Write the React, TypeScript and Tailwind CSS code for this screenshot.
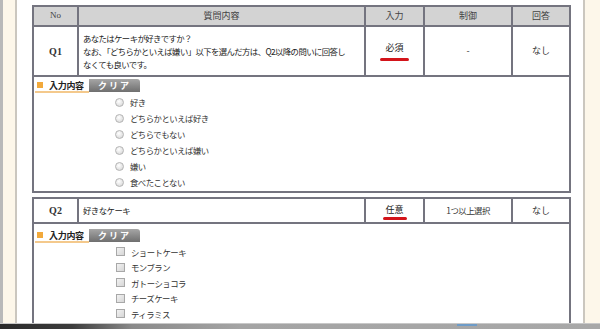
import React from "react";

const B = "border-[#74747f]";

function Radio() {
  return (
    <span className="inline-block w-[9px] h-[9px] rounded-full border border-[#b4b4b4] bg-[radial-gradient(circle_at_40%_35%,#ffffff_0%,#e4e4e4_60%,#cfcfcf_100%)]" />
  );
}

function Check() {
  return (
    <span className="inline-block w-[9px] h-[9px] border border-[#a8a8a8] bg-[linear-gradient(135deg,#f2f2f2,#d6d6d6)]" />
  );
}

function Label() {
  return (
    <div className="flex items-start">
      <div className="ml-[1px] w-[54px] h-[14px] border-b-2 border-[#f4c98c] flex items-center pl-[2px]">
        <span className="w-[6px] h-[6px] bg-[#f2a93b]" />
        <span className="ml-[6px] text-[9px] font-bold leading-none text-[#222] tracking-[-0.3px]">入力内容</span>
      </div>
      <div className="w-[51px] h-[13px] rounded-tr-[3px] bg-[linear-gradient(to_bottom,#a6a6a6,#8a8a8a_50%,#6f6f6f)] flex items-center justify-center">
        <span className="text-[9px] font-bold text-white tracking-[2px] leading-none">クリア</span>
      </div>
    </div>
  );
}

function HeadCell({ w, first, children }: { w: string; first?: boolean; children: React.ReactNode }) {
  return (
    <div className={`${w} ${first ? "" : "border-l-2 " + B} flex items-center justify-center text-[9px] text-[#444]`}>
      {children}
    </div>
  );
}

export default function App() {
  const radios = ["好き", "どちらかといえば好き", "どちらでもない", "どちらかといえば嫌い", "嫌い", "食べたことない"];
  const checks = ["ショートケーキ", "モンブラン", "ガトーショコラ", "チーズケーキ", "ティラミス"];
  return (
    <div className="relative w-[600px] h-[329px] overflow-hidden flex bg-[#fdf7ea] font-['Noto_Sans_CJK_JP','Noto_Sans',sans-serif] text-[#333]">
      <div className="w-[3px] bg-[#b9b9b9]" />
      <div className="w-[12px] bg-[#fdf7ea]" />
      <div className="w-[2px] bg-[#cbc7bf]" />
      <div className="w-[566px] bg-white pl-[15px] pt-[5px]">
        {/* Q1 box */}
        <div className={`w-[539px] border-2 ${B}`}>
          <div className="flex h-[18px] bg-[#d3d3d3]">
            <HeadCell w="w-[43px]" first>
              <span className="font-['Liberation_Serif',serif] text-[9px]">No</span>
            </HeadCell>
            <HeadCell w="w-[287px]">質問内容</HeadCell>
            <HeadCell w="w-[59px]">入力</HeadCell>
            <HeadCell w="w-[88px]">制御</HeadCell>
            <HeadCell w="w-[58px]">回答</HeadCell>
          </div>
          <div className={`flex h-[50px] border-t-2 ${B}`}>
            <div className="w-[43px] flex items-center justify-center">
              <span className="font-['Liberation_Serif',serif] text-[10px] font-semibold text-[#333]">Q1</span>
            </div>
            <div className={`w-[287px] border-l-2 ${B} flex items-center px-[4px]`}>
              <div className="text-[8.4px] leading-[13px] text-[#222] tracking-[-0.6px] whitespace-nowrap">
                <div>あなたはケーキが好きですか？</div>
                <div>なお、「どちらかといえば嫌い」以下を選んだ方は、Q2以降の問いに回答し</div>
                <div>なくても良いです。</div>
              </div>
            </div>
            <div className={`w-[59px] border-l-2 ${B} flex flex-col items-center justify-center`}>
              <span className="mt-[2px] text-[9px] leading-none text-[#222]">必須</span>
              <span className="mt-[6px] w-[29px] h-[3px] rounded-full bg-[#d3141a]" />
            </div>
            <div className={`w-[88px] border-l-2 ${B} flex items-center justify-center text-[9px]`}>-</div>
            <div className={`w-[58px] border-l-2 ${B} flex items-center justify-center text-[9px]`}>なし</div>
          </div>
          <div className={`h-[116px] border-t-2 ${B} pt-[2px]`}>
            <Label />
            <div className="mt-[1px] pl-[81px]">
              {radios.map((r) => (
                <div key={r} className="h-[16px] flex items-center">
                  <Radio />
                  <span className="ml-[6px] text-[8.4px] text-[#333] tracking-[-0.5px] leading-none">{r}</span>
                </div>
              ))}
            </div>
          </div>
        </div>
        {/* Q2 box */}
        <div className={`mt-[4px] w-[539px] border-2 border-b-0 ${B} h-[140px]`}>
          <div className="flex h-[23px]">
            <div className="w-[43px] flex items-center justify-center">
              <span className="font-['Liberation_Serif',serif] text-[10px] font-semibold text-[#333]">Q2</span>
            </div>
            <div className={`w-[287px] border-l-2 ${B} flex items-center px-[4px]`}>
              <span className="text-[8.4px] text-[#222] tracking-[-0.5px]">好きなケーキ</span>
            </div>
            <div className={`w-[59px] border-l-2 ${B} flex flex-col items-center justify-center`}>
              <span className="mt-[3px] text-[9px] leading-none text-[#222]">任意</span>
              <span className="mt-[3px] w-[24px] h-[3px] rounded-full bg-[#d3141a]" />
            </div>
            <div className={`w-[88px] border-l-2 ${B} flex items-center justify-center text-[8.4px] tracking-[-0.5px]`}>1つ以上選択</div>
            <div className={`w-[58px] border-l-2 ${B} flex items-center justify-center text-[9px]`}>なし</div>
          </div>
          <div className={`border-t-2 ${B} pt-[5px]`}>
            <Label />
            <div className="mt-[1px] pl-[82px]">
              {checks.map((c) => (
                <div key={c} className="h-[15.5px] flex items-center">
                  <Check />
                  <span className="ml-[6px] text-[8.4px] text-[#333] tracking-[-0.5px] leading-none">{c}</span>
                </div>
              ))}
              <div className="h-[15.5px] flex items-center">
                <Check />
              </div>
            </div>
          </div>
        </div>
      </div>
      <div className="w-[2px] bg-[#cbc7bf]" />
      <div className="flex-1 bg-[#fdf7ea]" />
      <div className="absolute left-0 right-0 bottom-0 h-[6px] bg-[linear-gradient(to_right,#2a2a2a_0%,#3c3c3c_12%,#8a8a8a_22%,#a4a4a4_40%,#a8a8a8_100%)] border-t border-[#c8c8c8]">
        <div className="absolute left-[457px] top-0 w-[20px] h-[2px] bg-[#6e9cc8]" />
      </div>
    </div>
  );
}
